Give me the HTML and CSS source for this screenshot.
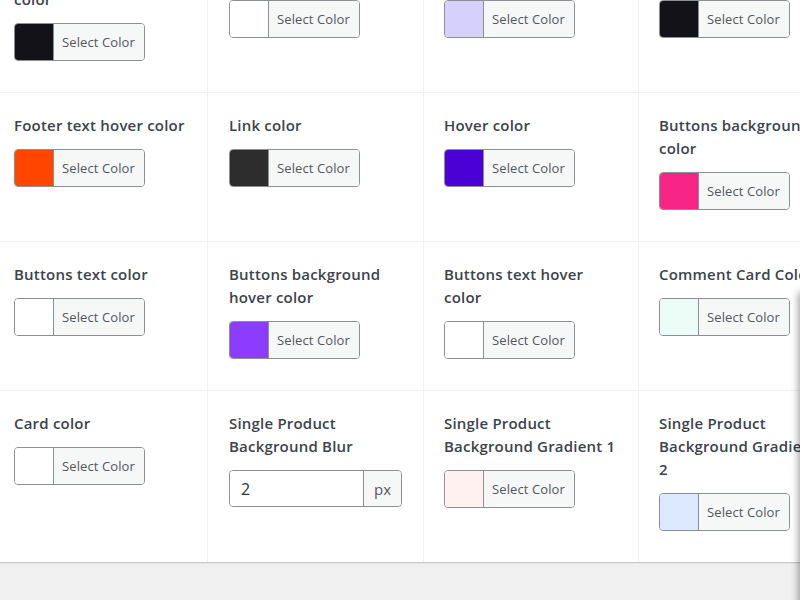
FILE: index.html
```html
<!DOCTYPE html>
<html lang="en">
<head>
    <meta charset="UTF-8">
    <meta name="viewport" content="width=device-width, initial-scale=1.0">
    <title>Theme Colors</title>
    <link rel="stylesheet" href="styles.css">
</head>
<body>
    <div class="settings">
        <div class="settings-grid">
            <!-- row 1 -->
            <div class="field">
                <p class="field-label">Footer background color</p>
                <div class="picker"><span class="swatch" style="background:#121218"></span><span class="picker-btn">Select Color</span></div>
            </div>
            <div class="field">
                <p class="field-label">Header color</p>
                <div class="picker"><span class="swatch" style="background:#ffffff"></span><span class="picker-btn">Select Color</span></div>
            </div>
            <div class="field">
                <p class="field-label">Accent color</p>
                <div class="picker"><span class="swatch" style="background:#d5d1fc"></span><span class="picker-btn">Select Color</span></div>
            </div>
            <div class="field">
                <p class="field-label">Footer color</p>
                <div class="picker"><span class="swatch" style="background:#121218"></span><span class="picker-btn">Select Color</span></div>
            </div>

            <!-- row 2 -->
            <div class="field">
                <p class="field-label">Footer text hover color</p>
                <div class="picker"><span class="swatch" style="background:#ff4500"></span><span class="picker-btn">Select Color</span></div>
            </div>
            <div class="field">
                <p class="field-label">Link color</p>
                <div class="picker"><span class="swatch" style="background:#2d2d2d"></span><span class="picker-btn">Select Color</span></div>
            </div>
            <div class="field">
                <p class="field-label">Hover color</p>
                <div class="picker"><span class="swatch" style="background:#4b00d6"></span><span class="picker-btn">Select Color</span></div>
            </div>
            <div class="field">
                <p class="field-label">Buttons background color</p>
                <div class="picker"><span class="swatch" style="background:#f72585"></span><span class="picker-btn">Select Color</span></div>
            </div>

            <!-- row 3 -->
            <div class="field">
                <p class="field-label">Buttons text color</p>
                <div class="picker"><span class="swatch" style="background:#ffffff"></span><span class="picker-btn">Select Color</span></div>
            </div>
            <div class="field">
                <p class="field-label">Buttons background hover color</p>
                <div class="picker"><span class="swatch" style="background:#8c3cff"></span><span class="picker-btn">Select Color</span></div>
            </div>
            <div class="field">
                <p class="field-label">Buttons text hover color</p>
                <div class="picker"><span class="swatch" style="background:#ffffff"></span><span class="picker-btn">Select Color</span></div>
            </div>
            <div class="field">
                <p class="field-label">Comment Card Color</p>
                <div class="picker"><span class="swatch" style="background:#ecfdf8"></span><span class="picker-btn">Select Color</span></div>
            </div>

            <!-- row 4 -->
            <div class="field">
                <p class="field-label">Card color</p>
                <div class="picker"><span class="swatch" style="background:#ffffff"></span><span class="picker-btn">Select Color</span></div>
            </div>
            <div class="field">
                <p class="field-label">Single Product Background Blur</p>
                <div class="unit-input">
                    <input type="text" value="2">
                    <span class="unit">px</span>
                </div>
            </div>
            <div class="field">
                <p class="field-label">Single Product Background Gradient 1</p>
                <div class="picker"><span class="swatch" style="background:#fff1ef"></span><span class="picker-btn">Select Color</span></div>
            </div>
            <div class="field field-narrow">
                <p class="field-label">Single Product Background Gradient 2</p>
                <div class="picker"><span class="swatch" style="background:#dce8fd"></span><span class="picker-btn">Select Color</span></div>
            </div>
        </div>
    </div>

    <div class="side-panel"></div>
</body>
</html>
```

FILE: styles.css
```css
body {
    margin: 0;
    background-color: #f0f0f1;
    font-family: "Open Sans", "Noto Sans", sans-serif;
    color: #3c434a;
    overflow: hidden;
    height: 600px;
}

.settings {
    background-color: #fff;
    margin-top: -56px;
    margin-left: -7px;
    width: 861px;
    border-bottom: 1px solid #c8c9cc;
    box-shadow: 0 1px 1px rgba(0,0,0,0.04);
}

.settings-grid {
    display: grid;
    grid-template-columns: 215px 216px 215px 215px;
}

.field {
    box-sizing: border-box;
    padding: 21px 21px 31px;
    border-right: 1px solid #f0f0f1;
    border-bottom: 1px solid #f0f0f1;
}

/* third column sits one pixel further left */
.field:nth-child(4n+3),
.field:nth-child(4n+4) {
    padding-left: 20px;
}

.field:nth-last-child(-n+4) {
    border-bottom: none;
}

.field-narrow .field-label {
    max-width: 165px;
}

.field-label {
    margin: 0 0 12px;
    font-size: 15px;
    font-weight: 600;
    letter-spacing: 0.2px;
    line-height: 23px;
    color: #3c434a;
}

.picker {
    display: flex;
    width: max-content;
    height: 38px;
    box-sizing: border-box;
    border: 1px solid #8c8f94;
    border-radius: 4px;
    overflow: hidden;
}

.swatch {
    width: 38px;
    border-right: 1px solid #8c8f94;
}

.picker-btn {
    display: flex;
    align-items: center;
    padding: 0 8px;
    width: 90px;
    box-sizing: border-box;
    background-color: #f6f7f7;
    font-size: 13px;
    letter-spacing: 0.1px;
    color: #50575e;
}

.unit-input {
    display: flex;
    width: 173px;
    height: 37px;
    box-sizing: border-box;
    border: 1px solid #8c8f94;
    border-radius: 4px;
    overflow: hidden;
}

.unit-input input {
    flex: 1;
    min-width: 0;
    border: none;
    padding: 0 11px;
    font-family: inherit;
    font-size: 16px;
    color: #2c3338;
    outline: none;
}

.unit {
    display: flex;
    align-items: center;
    padding: 0 10px;
    border-left: 1px solid #8c8f94;
    background-color: #f6f7f7;
    font-size: 15px;
    color: #50575e;
}

/* edge of a panel that slides in from the right */
.side-panel {
    position: fixed;
    left: 800px;
    top: 292px;
    width: 300px;
    height: 400px;
    background-color: #fff;
    box-shadow: -2px 0 7px rgba(0,0,0,0.35);
}
```
